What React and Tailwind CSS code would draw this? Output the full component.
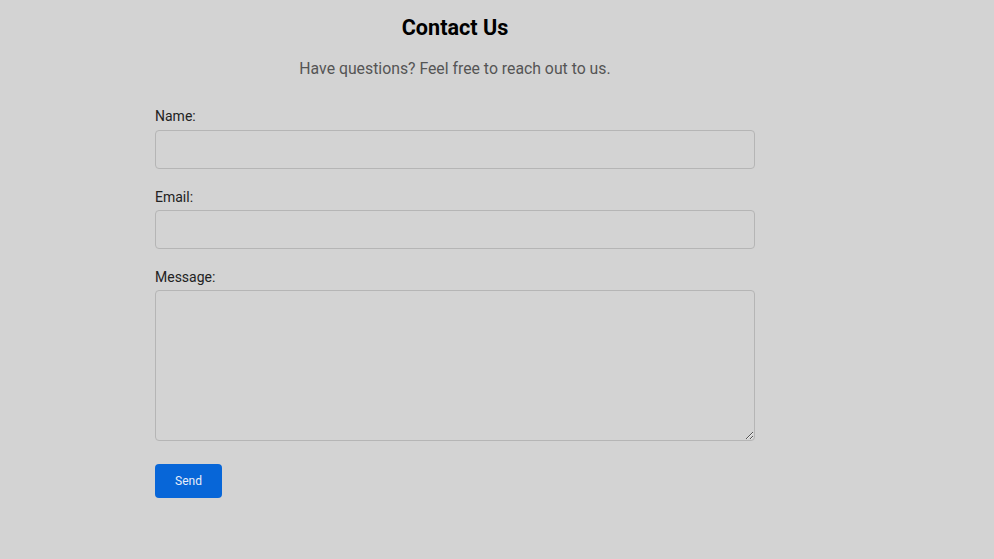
export default function App() {
  return (
    <div className="min-h-[559px] w-full bg-[#d3d3d3] font-['Roboto',sans-serif]">
      <div className="ml-[155px] w-[600px] pt-[14px]">
        <h2 className="text-center text-[21.6px] leading-[28px] font-bold text-black">Contact Us</h2>
        <p className="mt-[15px] text-center text-[15.8px] leading-[24px] text-[#555555]">
          Have questions? Feel free to reach out to us.
        </p>
        <form className="mt-[25px] flex flex-col" onSubmit={(e) => e.preventDefault()}>
          <label className="block text-[14px] leading-[20px] text-[#222222]">Name:</label>
          <input type="text" className="mt-[4px] h-[39px] w-full rounded-[4px] border border-[#b5b5b5] bg-[#d3d3d3]" />
          <label className="mt-[18px] block text-[14px] leading-[20px] text-[#222222]">Email:</label>
          <input type="email" className="mt-[3px] h-[39px] w-full rounded-[4px] border border-[#b5b5b5] bg-[#d3d3d3]" />
          <label className="mt-[18px] block text-[14px] leading-[20px] text-[#222222]">Message:</label>
          <textarea className="mt-[3px] h-[151px] w-full rounded-[4px] border border-[#b5b5b5] bg-[#d3d3d3]" />
          <div className="mt-[23px]">
            <button type="submit" className="h-[34px] w-[67px] rounded-[4px] bg-[#0766d8] text-[12px] text-[#e8eefa]">
              Send
            </button>
          </div>
        </form>
      </div>
    </div>
  );
}
